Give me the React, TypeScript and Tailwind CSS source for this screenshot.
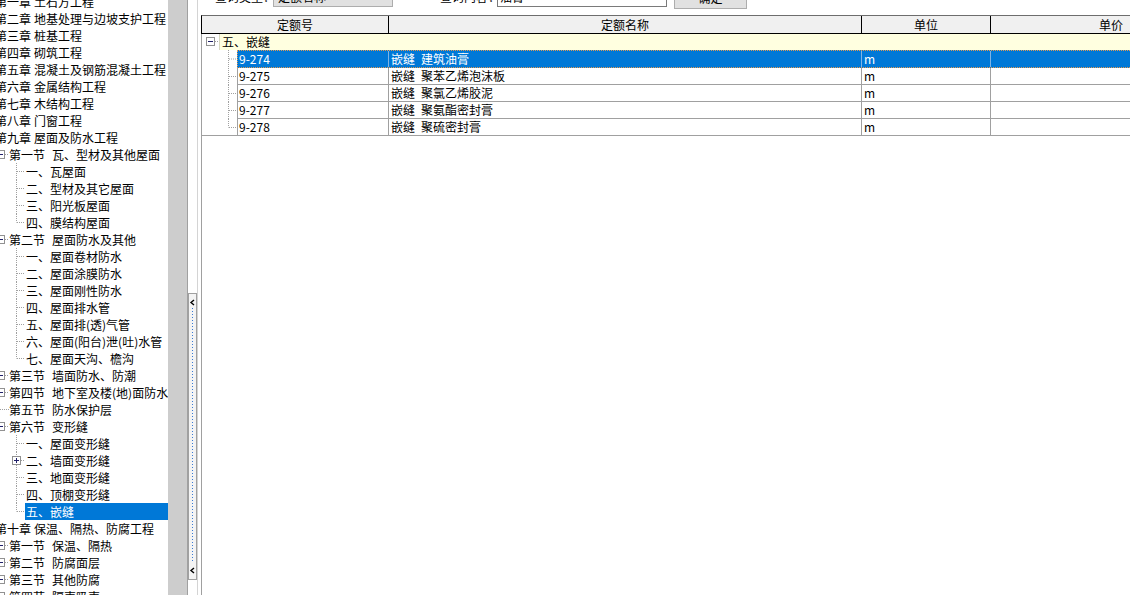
import React from 'react';

type Node = {
  level: 0 | 1 | 2;
  label?: string;
  name: string;
  box?: 'minus' | 'plus' | 'none';
  last?: boolean;
  selected?: boolean;
};

const tree: Node[] = [
  { level: 0, label: '第一章', name: '土石方工程' },
  { level: 0, label: '第二章', name: '地基处理与边坡支护工程' },
  { level: 0, label: '第三章', name: '桩基工程' },
  { level: 0, label: '第四章', name: '砌筑工程' },
  { level: 0, label: '第五章', name: '混凝土及钢筋混凝土工程' },
  { level: 0, label: '第六章', name: '金属结构工程' },
  { level: 0, label: '第七章', name: '木结构工程' },
  { level: 0, label: '第八章', name: '门窗工程' },
  { level: 0, label: '第九章', name: '屋面及防水工程' },
  { level: 1, label: '第一节', name: '瓦、型材及其他屋面', box: 'minus' },
  { level: 2, name: '一、瓦屋面' },
  { level: 2, name: '二、型材及其它屋面' },
  { level: 2, name: '三、阳光板屋面' },
  { level: 2, name: '四、膜结构屋面', last: true },
  { level: 1, label: '第二节', name: '屋面防水及其他', box: 'minus' },
  { level: 2, name: '一、屋面卷材防水' },
  { level: 2, name: '二、屋面涂膜防水' },
  { level: 2, name: '三、屋面刚性防水' },
  { level: 2, name: '四、屋面排水管' },
  { level: 2, name: '五、屋面排(透)气管' },
  { level: 2, name: '六、屋面(阳台)泄(吐)水管' },
  { level: 2, name: '七、屋面天沟、檐沟', last: true },
  { level: 1, label: '第三节', name: '墙面防水、防潮', box: 'minus' },
  { level: 1, label: '第四节', name: '地下室及楼(地)面防水', box: 'minus' },
  { level: 1, label: '第五节', name: '防水保护层', box: 'none' },
  { level: 1, label: '第六节', name: '变形缝', box: 'minus' },
  { level: 2, name: '一、屋面变形缝' },
  { level: 2, name: '二、墙面变形缝', box: 'plus' },
  { level: 2, name: '三、地面变形缝' },
  { level: 2, name: '四、顶棚变形缝' },
  { level: 2, name: '五、嵌缝', last: true, selected: true },
  { level: 0, label: '第十章', name: '保温、隔热、防腐工程' },
  { level: 1, label: '第一节', name: '保温、隔热', box: 'minus' },
  { level: 1, label: '第二节', name: '防腐面层', box: 'minus' },
  { level: 1, label: '第三节', name: '其他防腐', box: 'minus' },
  { level: 1, label: '第四节', name: '隔声吸声', box: 'minus' },
];

const DOT = '#a0a0a0';

function Box({ x, y, plus }: { x: number; y: number; plus?: boolean }) {
  return (
    <g>
      <rect x={x + 0.5} y={y + 0.5} width={8} height={8} fill="white" stroke="#919191" />
      <line x1={x + 2} y1={y + 4.5} x2={x + 7} y2={y + 4.5} stroke="#20206a" />
      {plus && <line x1={x + 4.5} y1={y + 2} x2={x + 4.5} y2={y + 7} stroke="#20206a" />}
    </g>
  );
}

function TreeRow({ n }: { n: Node }) {
  if (n.level === 0) {
    return (
      <div className="flex h-[17px] items-center whitespace-nowrap">
        <span className="ml-[-5px]">{n.label}</span>
        <span className="ml-[3px]">{n.name}</span>
      </div>
    );
  }
  if (n.level === 1) {
    return (
      <div className="flex h-[17px] items-center whitespace-nowrap">
        <svg width="14" height="17" className="ml-[-5px] shrink-0">
          {n.box === 'none' ? (
            <line x1={5} y1={8.5} x2={14} y2={8.5} stroke={DOT} strokeDasharray="1 1" />
          ) : (
            <>
              <Box x={1} y={4} plus={n.box === 'plus'} />
              <line x1={10} y1={8.5} x2={14} y2={8.5} stroke={DOT} strokeDasharray="1 1" />
            </>
          )}
        </svg>
        <span>{n.label}</span>
        <span className="ml-[7px]">{n.name}</span>
      </div>
    );
  }
  return (
    <div className="flex h-[17px] items-stretch whitespace-nowrap">
      <svg width="25" height="17" className="shrink-0">
        {n.box === 'plus' ? (
          <>
            <line x1={16.5} y1={0} x2={16.5} y2={4} stroke={DOT} strokeDasharray="1 1" />
            <line x1={16.5} y1={13} x2={16.5} y2={17} stroke={DOT} strokeDasharray="1 1" />
            <Box x={12} y={4} plus />
            <line x1={21} y1={8.5} x2={25} y2={8.5} stroke={DOT} strokeDasharray="1 1" />
          </>
        ) : (
          <>
            <line x1={16.5} y1={0} x2={16.5} y2={n.last ? 8.5 : 17} stroke={DOT} strokeDasharray="1 1" />
            <line x1={17} y1={8.5} x2={25} y2={8.5} stroke={DOT} strokeDasharray="1 1" />
          </>
        )}
      </svg>
      <div
        className={
          n.selected
            ? 'flex flex-1 items-center bg-[#0078d7] pl-[1px] text-white'
            : 'flex flex-1 items-center pl-[1px]'
        }
      >
        {n.name}
      </div>
    </div>
  );
}

const rows = [
  ['9-274', '嵌缝', '建筑油膏'],
  ['9-275', '嵌缝', '聚苯乙烯泡沫板'],
  ['9-276', '嵌缝', '聚氯乙烯胶泥'],
  ['9-277', '嵌缝', '聚氨酯密封膏'],
  ['9-278', '嵌缝', '聚硫密封膏'],
];

function DataRow({ r, i }: { r: string[]; i: number }) {
  const sel = i === 0;
  const last = i === rows.length - 1;
  const h = sel ? 18 : 17;
  const cy = sel ? 9 : 8.5;
  return (
    <div className={last ? 'flex h-[17px] border-b border-[#a0a0a0]' : sel ? 'flex h-[18px]' : 'flex h-[17px]'}>
      <svg width="35" height={last ? 16 : h} className="shrink-0">
        <line x1={26.5} y1={0} x2={26.5} y2={last ? cy : h} stroke={DOT} strokeDasharray="1 1" />
        <line x1={27} y1={cy} x2={35} y2={cy} stroke={DOT} strokeDasharray="1 1" />
      </svg>
      <div
        className={
          sel
            ? 'flex flex-1 border border-dotted border-[#e39a52] bg-[#0078d7] text-white'
            : last
            ? 'flex flex-1 border-l border-[#a0a0a0]'
            : 'flex flex-1 border-b border-l border-[#a0a0a0]'
        }
      >
        <div className={sel ? 'w-[151px] shrink-0 border-r border-[#7fb4e6] pl-[1px] leading-[16px]' : 'w-[151px] shrink-0 border-r border-[#a0a0a0] pl-[1px] leading-[16px]'}>
          {r[0]}
        </div>
        <div className={sel ? 'flex w-[473px] shrink-0 border-r border-[#7fb4e6] pl-[2px] leading-[16px]' : 'flex w-[473px] shrink-0 border-r border-[#a0a0a0] pl-[2px] leading-[16px]'}>
          <span>{r[1]}</span>
          <span className="ml-[6px]">{r[2]}</span>
        </div>
        <div className={sel ? 'w-[129px] shrink-0 border-r border-[#7fb4e6] pl-[2px] leading-[16px]' : 'w-[129px] shrink-0 border-r border-[#a0a0a0] pl-[2px] leading-[16px]'}>
          m
        </div>
        <div className="w-[240px] shrink-0" />
      </div>
    </div>
  );
}

export default function App() {
  return (
    <div className="flex h-[595px] w-[1130px] overflow-hidden bg-white font-['Noto_Sans_CJK_SC',sans-serif] text-[12px] leading-[17px] text-black">
      {/* tree */}
      <div className="w-[168px] shrink-0 overflow-hidden">
        <div className="mt-[-7px]">
          {tree.map((n, i) => (
            <TreeRow key={i} n={n} />
          ))}
        </div>
      </div>
      <div className="w-[19px] shrink-0 bg-[#cdcdcd]" />
      {/* splitter */}
      <div className="flex w-[14px] shrink-0">
        <div className="w-px bg-[#a0a0a0]" />
        <div className="flex w-[9px] flex-col bg-white">
          <div className="h-[293px]" />
          <div className="h-[287px] border border-[#a0a0a0] bg-[#f4f4f4]">
            <svg width="7" height="285">
              <polyline points="5,6 2,8.5 5,11" fill="none" stroke="#000" strokeWidth="1.4" />
              <line x1={3.5} y1={14} x2={3.5} y2={269} stroke="#3a7bd5" strokeDasharray="1 2" />
              <polyline points="5,274 2,276.5 5,279" fill="none" stroke="#000" strokeWidth="1.4" />
            </svg>
          </div>
        </div>
        <div className="w-px bg-[#d4d4d4]" />
        <div className="w-[3px]" />
      </div>
      {/* main */}
      <div className="flex min-w-0 flex-1 flex-col">
        <div className="h-[15px] shrink-0 overflow-hidden">
          <div className="ml-[14px] mt-[-14px] flex items-start whitespace-nowrap">
            <div className="flex h-[21px] w-[58px] items-center">查询类型：</div>
            <div className="flex h-[21px] w-[120px] items-center justify-between border border-[#adadad] bg-[#e1e1e1] pl-[4px] pr-[6px]">
              <span>定额名称</span>
              <svg width="8" height="5">
                <polyline points="0.5,0.5 4,4 7.5,0.5" fill="none" stroke="#555" />
              </svg>
            </div>
            <div className="ml-[47px] flex h-[21px] w-[57px] items-center">查询内容：</div>
            <div className="flex h-[21px] w-[170px] items-center border border-[#7a7a7a] bg-white pl-[2px]">油膏</div>
            <div className="ml-[7px] flex h-[23px] w-[73px] items-center justify-center border border-[#adadad] bg-[#e1e1e1]">
              确定
            </div>
          </div>
        </div>
        {/* header */}
        <div className="flex h-[19px] shrink-0 border-b border-l border-t border-b-black border-l-black border-t-[#6d6d6d] bg-[#f0f0f0] whitespace-nowrap">
          <div className="flex w-[187px] shrink-0 items-center justify-center border-r border-black">定额号</div>
          <div className="flex w-[473px] shrink-0 items-center justify-center border-r border-black">定额名称</div>
          <div className="flex w-[129px] shrink-0 items-center justify-center border-r border-black">单位</div>
          <div className="flex w-[240px] shrink-0 items-center justify-center">单价</div>
        </div>
        {/* body */}
        <div className="flex-1 border-l border-[#a0a0a0] whitespace-nowrap">
          <div className="flex h-[16px]">
            <svg width="17" height="16" className="shrink-0">
              <Box x={4} y={3} />
              <line x1={13} y1={7.5} x2={17} y2={7.5} stroke={DOT} strokeDasharray="1 1" />
            </svg>
            <div className="flex-1 border-l border-[#d8d8c0] bg-[#ffffe0] pl-[2px] leading-[16px]">五、嵌缝</div>
          </div>
          {rows.map((r, i) => (
            <DataRow key={i} r={r} i={i} />
          ))}
        </div>
      </div>
    </div>
  );
}
